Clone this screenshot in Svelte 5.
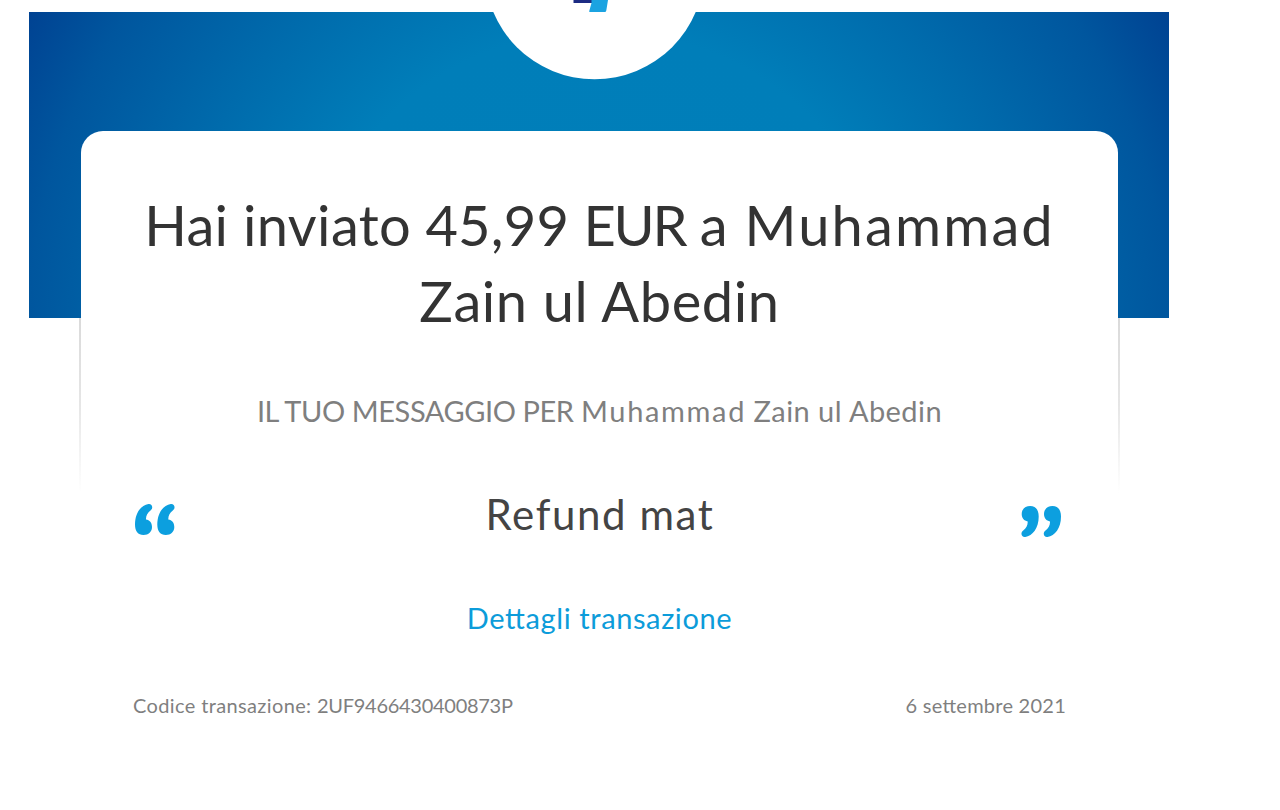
<script>
  const title = [
    [
      { text: 'Hai inviato', spacing: 0.35 },
      { text: '45,99', spacing: 0.2 },
      { text: 'EUR', spacing: -2.2 },
      { text: 'a', spacing: 2.6 },
      { text: 'Muhammad', spacing: 2.15 }
    ],
    [{ text: 'Zain ul Abedin', spacing: 0.6 }]
  ];
  const caption = [
    { text: 'IL TUO MESSAGGIO PER', spacing: -0.42 },
    { text: 'Muhammad', spacing: 1.65 },
    { text: 'Zain ul Abedin', spacing: 0.45 }
  ];
  const comma =
    'M15.5 1C8 2 2 10 2 21.5C2 28 5 32 10.5 32C15.6 32 19 28.6 19 24C19 19.8 16.6 17.2 13 16.6C12.8 12.8 14.5 9.8 17.5 7.6C20.8 5 19 .5 15.5 1Z';
</script>

{#snippet words(list)}
  {#each list as part, i}{#if i > 0}{' '}{/if}<span style="letter-spacing: {part.spacing}px">{part.text}</span>{/each}
{/snippet}

<main class="mail">
  <header class="banner">
    <div class="logo">
      <svg width="220" height="110" viewBox="0 0 220 110" aria-hidden="true">
        <circle cx="110.5" cy="-30.5" r="109.8" fill="#fff" />
        <path d="M89.5 0H108V3H89.5Z" fill="#1c2b83" />
        <path d="M107.5 3V0H124L122.3 10.4Q122 12 120.8 12H105.8Q105 12 105.2 11.2Z" fill="#1ba3e1" />
      </svg>
    </div>
  </header>

  <section class="card">
    <h1>
      {#each title as line}
        <span class="line">{@render words(line)}</span>
      {/each}
    </h1>
    <p class="caption">{@render words(caption)}</p>
    <div class="quote">
      <svg class="mark" width="42" height="34" viewBox="0 0 42 34" aria-hidden="true">
        <g fill="#0c9fdf">
          <path d={comma} />
          <path d={comma} transform="translate(22.3 0)" />
        </g>
      </svg>
      <p class="message">Refund mat</p>
      <svg class="mark close" width="42" height="34" viewBox="0 0 42 34" aria-hidden="true">
        <g fill="#0c9fdf" transform="rotate(180 21 17)">
          <path d={comma} />
          <path d={comma} transform="translate(22.3 0)" />
        </g>
      </svg>
    </div>
    <a class="details" href="#details">Dettagli transazione</a>
    <footer>
      <span class="code">Codice transazione: <span class="id">2UF9466430400873P</span></span>
      <time datetime="2021-09-06">6 settembre 2021</time>
    </footer>
  </section>
</main>

<style>
  :global(body) {
    margin: 0;
    background: #fff;
  }
  .mail {
    box-sizing: border-box;
    width: 1280px;
    height: 810px;
    padding: 12px 111px 0 29px;
    overflow: hidden;
    background: #fff;
    font-family: Lato, 'Noto Sans', sans-serif;
    font-feature-settings: 'liga' 1;
  }
  .banner {
    height: 306px;
    background: radial-gradient(ellipse 655px 655px at 570px 320px, #007fba 0, #007eb9 46%, #006bac 66%, #00569e 87%, #004292 100%);
  }
  .logo {
    width: 220px;
    height: 110px;
    margin: 0 auto;
    position: relative;
    top: -12px;
    left: -5px;
  }
  .logo svg {
    display: block;
  }
  .card {
    box-sizing: border-box;
    position: relative;
    width: 1037px;
    height: 640px;
    margin: -187px 0 0 52px;
    padding: 56px 52px 0;
    border-radius: 22px;
    background: #fff;
    text-align: center;
  }
  .card::before,
  .card::after {
    content: '';
    position: absolute;
    top: 187px;
    width: 2px;
    height: 175px;
    background: linear-gradient(#dadada, #e6e6e6 50%, #fff);
  }
  .card::before {
    left: -2px;
  }
  .card::after {
    right: -2px;
  }
  h1,
  p {
    margin: 0;
    font-weight: 400;
  }
  h1 {
    font-size: 56px;
    line-height: 76px;
    color: #333;
    white-space: nowrap;
  }
  .line {
    display: block;
  }
  .caption {
    margin-top: 52px;
    font-size: 29px;
    line-height: 40px;
    color: #7f7f7f;
    white-space: nowrap;
  }
  .quote {
    display: flex;
    justify-content: space-between;
    margin-top: 55px;
    height: 56px;
  }
  .mark {
    margin-top: 17px;
  }
  .close {
    margin: 18px 3px 0 0;
  }
  .message {
    padding-left: 4px;
    font-size: 42px;
    line-height: 56px;
    letter-spacing: 1.6px;
    color: #444;
  }
  .details {
    display: block;
    margin-top: 56px;
    font-size: 29px;
    line-height: 40px;
    letter-spacing: 0.6px;
    color: #0c9cda;
    text-decoration: none;
  }
  footer {
    display: flex;
    justify-content: space-between;
    margin-top: 53px;
    font-size: 20px;
    line-height: 28px;
    color: #7f7f7f;
  }
  .code {
    letter-spacing: 0.37px;
  }
  time {
    letter-spacing: 0.25px;
  }
  .id {
    letter-spacing: -0.28px;
  }
</style>
